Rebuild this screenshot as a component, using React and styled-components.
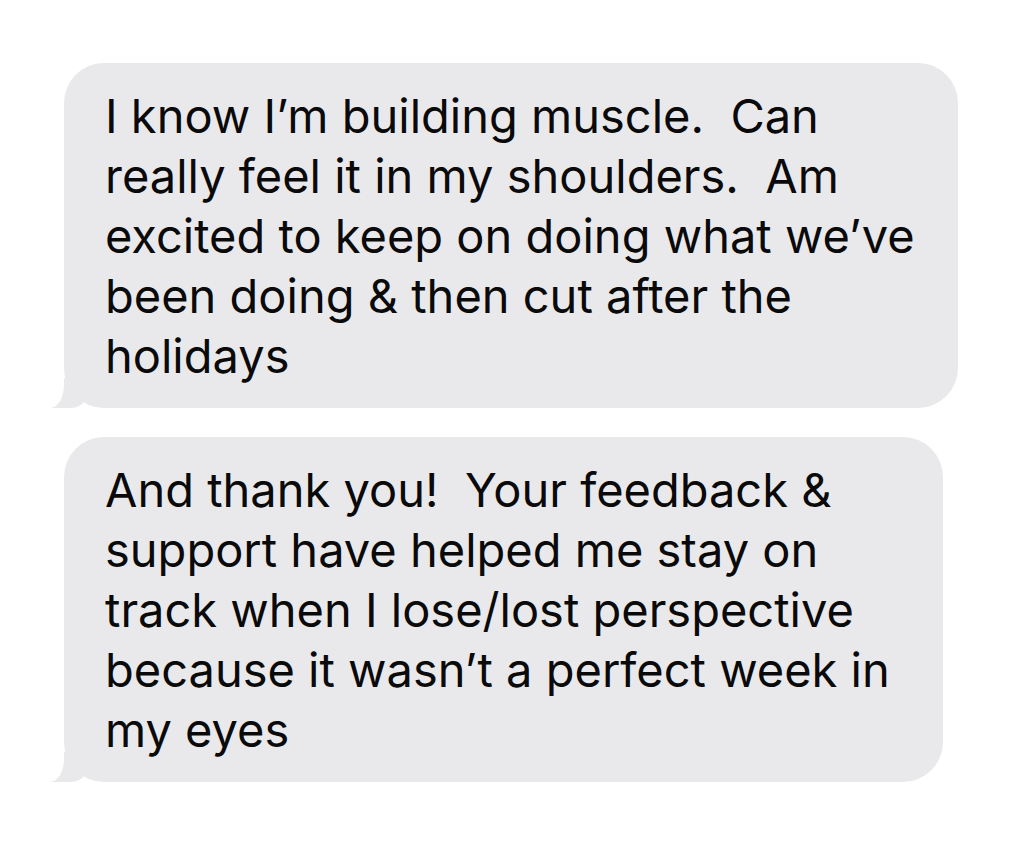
import styled, { createGlobalStyle } from 'styled-components';

const GlobalStyle = createGlobalStyle`
  html, body {
    margin: 0;
    padding: 0;
    background: #ffffff;
  }
`;

const Thread = styled.div`
  display: flex;
  flex-direction: column;
  align-items: flex-start;
  gap: 29px;
  padding: 63px 0 0 64px;
  font-family: Inter, 'Noto Sans', sans-serif;
`;

const Bubble = styled.div`
  position: relative;
  background: #e9e9eb;
  border-radius: 40px;
  padding: 23px ${({ $padRight }) => $padRight}px 22px 41px;
  color: #0a0a0a;
  font-size: 47px;
  line-height: 60px;

  &::before {
    content: '';
    position: absolute;
    left: -14px;
    bottom: 0;
    width: 36px;
    height: 30px;
    background: #e9e9eb;
    border-bottom-right-radius: 16px 12px;
  }

  &::after {
    content: '';
    position: absolute;
    left: -30px;
    bottom: 0;
    width: 30px;
    height: 32px;
    background: #ffffff;
    border-bottom-right-radius: 14px 23px;
  }
`;

const Line = styled.div`
  white-space: pre;
`;

const messages = [
  {
    padRight: 43,
    lines: [
      'I know I\u2019m building muscle.  Can',
      'really feel it in my shoulders.  Am',
      'excited to keep on doing what we\u2019ve',
      'been doing & then cut after the',
      'holidays',
    ],
  },
  {
    padRight: 53,
    lines: [
      'And thank you!  Your feedback &',
      'support have helped me stay on',
      'track when I lose/lost perspective',
      'because it wasn\u2019t a perfect week in',
      'my eyes',
    ],
  },
];

export default function App() {
  return (
    <>
      <GlobalStyle />
      <Thread>
        {messages.map((msg, i) => (
          <Bubble key={i} $padRight={msg.padRight}>
            {msg.lines.map((line, j) => (
              <Line key={j}>{line}</Line>
            ))}
          </Bubble>
        ))}
      </Thread>
    </>
  );
}
